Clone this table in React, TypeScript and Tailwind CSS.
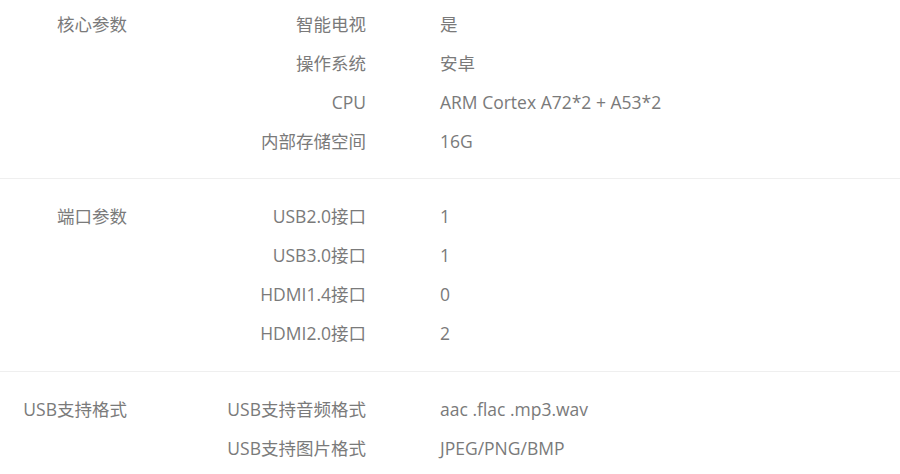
import React from "react";

type Section = { title: string; rows: [string, string][] };

const sections: Section[] = [
  {
    title: "核心参数",
    rows: [
      ["智能电视", "是"],
      ["操作系统", "安卓"],
      ["CPU", "ARM Cortex A72*2 + A53*2"],
      ["内部存储空间", "16G"],
    ],
  },
  {
    title: "端口参数",
    rows: [
      ["USB2.0接口", "1"],
      ["USB3.0接口", "1"],
      ["HDMI1.4接口", "0"],
      ["HDMI2.0接口", "2"],
    ],
  },
  {
    title: "USB支持格式",
    rows: [
      ["USB支持音频格式", "aac .flac .mp3.wav"],
      ["USB支持图片格式", "JPEG/PNG/BMP"],
    ],
  },
];

export default function App() {
  return (
    <div
      className="w-[900px] h-[474px] overflow-hidden bg-white text-[#7a7a7a] text-[17.5px]"
      style={{ fontFamily: '"Open Sans", "Noto Sans CJK SC", sans-serif' }}
    >
      {sections.map((s, i) => (
        <div
          key={s.title}
          className={
            "flex border-b border-[#efefef] " +
            (i === 0 ? "pt-[5px] pb-[17px]" : "pt-[18px] pb-[18px]")
          }
        >
          <div className="w-[127px] shrink-0 text-right leading-[39px]">{s.title}</div>
          <div className="flex flex-col">
            {s.rows.map(([k, v]) => (
              <div key={k} className="flex leading-[39px]">
                <div className="w-[239px] text-right">{k}</div>
                <div className="pl-[74px]">{v}</div>
              </div>
            ))}
          </div>
        </div>
      ))}
    </div>
  );
}
